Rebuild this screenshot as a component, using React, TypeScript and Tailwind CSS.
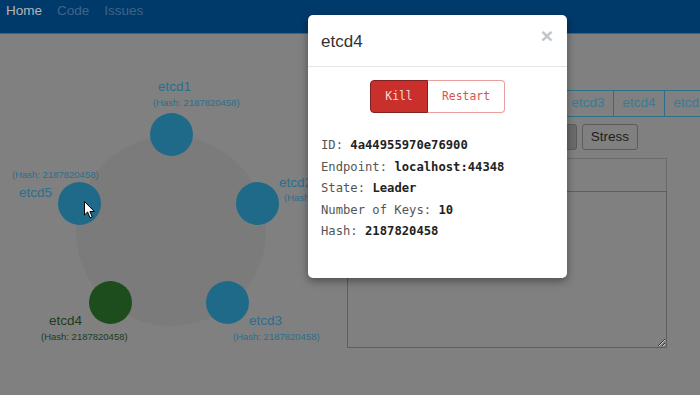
import React from "react";

const nodes = [
  { name: "etcd1", circle: "left-[150px] top-[79px] bg-[#1f6a89]", label: "left-[158px] top-[45px] text-[#2b6e8e]", hash: "left-[153px] top-[63px] text-[#2b6e8e]" },
  { name: "etcd2", circle: "left-[236px] top-[148px] bg-[#1f6a89]", label: "left-[279px] top-[141px] text-[#2b6e8e]", hash: "left-[284px] top-[158px] text-[#2b6e8e]" },
  { name: "etcd3", circle: "left-[206px] top-[247px] bg-[#1f6a89]", label: "left-[249px] top-[279px] text-[#2b6e8e]", hash: "left-[233px] top-[297px] text-[#2b6e8e]" },
  { name: "etcd4", circle: "left-[89px] top-[247px] bg-[#1d4c1d]", label: "left-[49px] top-[279px] text-[#1d3d1d]", hash: "left-[41px] top-[297px] text-[#1d3d1d]" },
  { name: "etcd5", circle: "left-[58px] top-[148px] bg-[#1f6a89]", label: "left-[19px] top-[151px] text-[#2b6e8e]", hash: "left-[12px] top-[135px] text-[#2b6e8e]" },
];

const info = [
  ["ID:", "4a44955970e76900"],
  ["Endpoint:", "localhost:44348"],
  ["State:", "Leader"],
  ["Number of Keys:", "10"],
  ["Hash:", "2187820458"],
];

export default function App() {
  return (
    <div className="relative w-[700px] h-[395px] overflow-hidden bg-[#808080] font-['Liberation_Sans',Arial,sans-serif]">
      {/* navbar */}
      <div className="h-[34px] bg-[#003a6b] border-b border-[#4d6275] flex items-start gap-[15px] pl-[6px] pt-[3px] text-[13.5px] leading-[16px]">
        <span className="text-[#b5b5b5]">Home</span>
        <span className="text-[#40638a]">Code</span>
        <span className="text-[#40638a]">Issues</span>
      </div>

      <div className="flex">
        {/* graph */}
        <div className="relative w-[346px] h-[361px] shrink-0">
          <div className="absolute left-[76px] top-[102px] w-[190px] h-[190px] rounded-full bg-[#7b7b7b]" />
          {nodes.map((n) => (
            <React.Fragment key={n.name}>
              <div className={`absolute w-[43px] h-[43px] rounded-full ${n.circle}`} />
              <div className={`absolute text-[13.5px] leading-[16px] whitespace-nowrap ${n.label}`}>{n.name}</div>
              <div className={`absolute text-[9.5px] leading-[12px] whitespace-nowrap ${n.hash}`}>(Hash: 2187820458)</div>
            </React.Fragment>
          ))}
          <svg className="absolute left-[84px] top-[167px]" width="12" height="18" viewBox="0 0 12 18">
            <path d="M0.5 0.5 L0.5 14 L3.6 11 L6 16.8 L8.2 15.8 L5.9 10.5 L10.3 10.5 Z" fill="#ffffff" stroke="#000000" strokeWidth="1" strokeLinejoin="round" />
          </svg>
        </div>

        {/* right panel */}
        <div className="flex-1 overflow-hidden pt-[56px]">
          <div className="flex h-[27px] border-y border-[#2d6f86] w-[420px]">
            {["", "etcd1", "etcd2", "etcd3", "etcd4", "etcd5"].map((t, i) => (
              <div
                key={i}
                className={`${i === 0 ? "w-[114px]" : "w-[51px] border-l border-[#2d6f86]"} flex items-center justify-center text-[13.5px] text-[#3b7a94] shrink-0`}
              >
                {t}
              </div>
            ))}
          </div>
          <div className="flex gap-[5px] mt-[7px] h-[26px]">
            <div className="w-[70px] rounded-[3px] border border-[#5c5c5c]" />
            <div className="w-[80px] rounded-[3px] border border-[#5c5c5c]" />
            <div className="w-[71px] rounded-[3px] bg-[#6b6b6b] border border-[#5c5c5c]" />
            <div className="w-[56px] rounded-[3px] border border-[#5c5c5c] flex items-center justify-center text-[13.5px] text-[#1c1c1c]">
              Stress
            </div>
          </div>
          <div className="mt-[8px] ml-[1px] w-[320px] flex flex-col">
            <div className="h-[33px] border border-[#6a6a6a] border-b-0" />
            <textarea className="h-[157px] w-full border border-[#5e5e5e] bg-[#808080] outline-none block" />
          </div>
        </div>
      </div>

      {/* modal */}
      <div className="absolute left-[308px] top-[15px] w-[259px] h-[263px] bg-white rounded-[5px] shadow-[0_3px_9px_rgba(0,0,0,0.4)]">
        <div className="h-[52px] border-b border-[#e5e5e5] flex items-center justify-between pl-[13px] pr-[14px]">
          <span className="text-[17px] text-[#333333] leading-[20px] mt-[2px]">etcd4</span>
          <span className="text-[21px] font-bold text-[#c4c4c4] leading-[20px] -mt-[10px]">×</span>
        </div>
        <div className="flex justify-center mt-[13px]">
          <div className="flex h-[33px] font-['DejaVu_Sans_Mono',monospace] text-[11.4px]">
            <div className="w-[58px] flex items-center justify-center bg-[#c9302c] border border-[#7f2320] rounded-l-[4px] text-[#f5dada]">
              Kill
            </div>
            <div className="w-[77px] flex items-center justify-center bg-white border border-l-0 border-[#e8a09e] rounded-r-[4px] text-[#d9534f]">
              Restart
            </div>
          </div>
        </div>
        <div className="mt-[22px] pl-[13px] font-['DejaVu_Sans_Mono',monospace] text-[12.2px] leading-[21.5px]">
          {info.map(([k, v]) => (
            <div key={k} className="whitespace-nowrap">
              <span className="text-[#555555]">{k} </span>
              <span className="font-bold text-[#222222]">{v}</span>
            </div>
          ))}
        </div>
      </div>
    </div>
  );
}
